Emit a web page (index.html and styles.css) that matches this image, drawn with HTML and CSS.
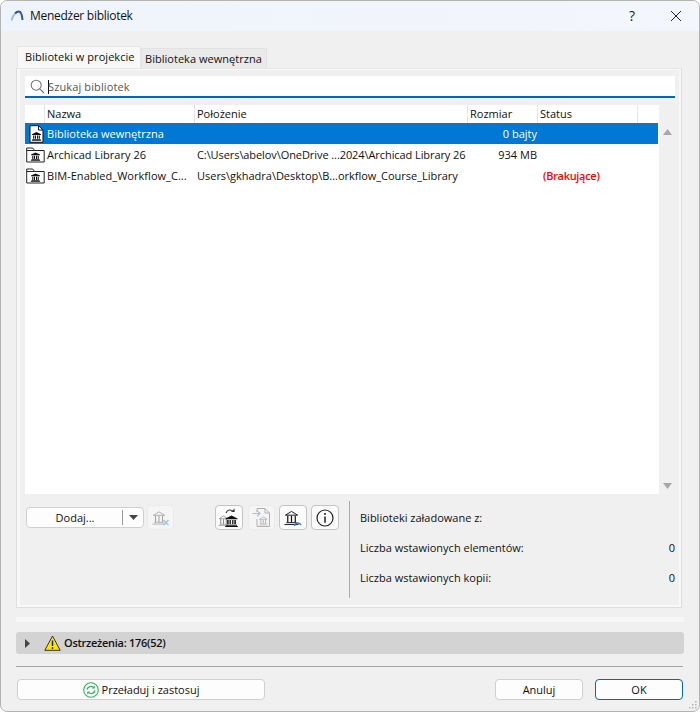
FILE: index.html
```html
<!DOCTYPE html>
<html lang="pl">
<head>
<meta charset="utf-8">
<title>Menedżer bibliotek</title>
<link rel="stylesheet" href="styles.css">
</head>
<body>
<svg class="defs" width="0" height="0">
  <symbol id="bank" viewBox="0 0 12 11">
    <path d="M6 .5 11.500 3.200V4H.5v-.8z" fill="currentColor"/>
    <path d="M2 4.500h1.400v4H2zM4.200 4.500h1.200v4H4.200zM6.600 4.500h1.200v4H6.600zM8.600 4.500H10v4H8.600z" fill="currentColor"/>
    <path d="M1 9h10v.9H1zM.2 10h11.600v1H.2z" fill="currentColor"/>
  </symbol>
  <symbol id="bank-line" viewBox="0 0 16 16">
    <path d="M1.500 5.500 8 1.500l6.500 4z" fill="none" stroke="currentColor"/>
    <path d="M4 6v7M8 6v7M12 6v7" fill="none" stroke="currentColor" stroke-width="1.300"/>
    <path d="M2.500 13.500h11M.5 15.500h15" fill="none" stroke="currentColor"/>
  </symbol>
</svg>
<div class="window">
  <header class="titlebar">
    <svg class="app-logo" width="16" height="14" viewBox="0 0 16 14"><path d="M5 4.500C6.200 3.200 7.500 2.600 8.800 2.600c2 0 3.200 3 3.700 8.400" fill="none" stroke="#2a4fb8" stroke-width="2"/><path d="M1.500 11.500C2.300 8.500 3.500 6 5 4.500" fill="none" stroke="#9dbcf0" stroke-width="2"/></svg>
    <span class="title">Menedżer bibliotek</span>
    <span class="help">?</span>
    <svg class="close" width="12" height="12" viewBox="0 0 12 12"><path d="M1 1l10 10M11 1 1 11" stroke="#222" stroke-width="1" fill="none"/></svg>
  </header>
  <main class="content">
    <div class="tabs">
      <div class="tab active">Biblioteki w projekcie</div>
      <div class="tab">Biblioteka wewnętrzna</div>
    </div>
    <section class="panel">
      <div class="search">
        <svg class="search-icon" width="15" height="15" viewBox="0 0 15 15"><circle cx="6.200" cy="6.200" r="5" fill="none" stroke="#777" stroke-width="1.100"/><path d="M9.800 9.800l4.200 4.200" stroke="#777" stroke-width="1.200"/></svg>
        <span class="caret"></span><span class="placeholder">Szukaj bibliotek</span>
      </div>
      <div class="list-area">
        <div class="list">
          <div class="row head">
            <div class="cell"></div><div class="cell">Nazwa</div><div class="cell">Położenie</div><div class="cell">Rozmiar</div><div class="cell">Status</div><div class="cell"></div>
          </div>
          <div class="row selected">
            <div class="ico">
              <svg width="15" height="18" viewBox="0 0 15 18"><path d="M1 .7h8.500L14 5v12.300H1z" fill="#fff" stroke="#111"/><path d="M9.500 .7V5H14" fill="none" stroke="#111"/><use href="#bank" x="2.500" y="6.500" width="10" height="9.500" color="#111"/></svg>
            </div>
            <div class="name">Biblioteka wewnętrzna</div><div class="path"></div><div class="size">0 bajty</div><div class="status"></div>
          </div>
          <div class="row">
            <div class="ico">
              <svg width="19" height="16" viewBox="0 0 19 16"><path d="M.7 15V1h6l2 2.500h9.500V15z" fill="#fff" stroke="#222"/><path d="M.7 3.500h8" fill="none" stroke="#222"/><use href="#bank" x="4.500" y="5" width="10" height="9" color="#111"/></svg>
            </div>
            <div class="name">Archicad Library 26</div><div class="path">C:\Users\abelov\OneDrive ...2024\Archicad Library 26</div><div class="size">934 MB</div><div class="status"></div>
          </div>
          <div class="row">
            <div class="ico">
              <svg width="19" height="16" viewBox="0 0 19 16"><path d="M.7 15V1h6l2 2.500h9.500V15z" fill="#fff" stroke="#222"/><path d="M.7 3.500h8" fill="none" stroke="#222"/><use href="#bank" x="4.500" y="5" width="10" height="9" color="#111"/></svg>
            </div>
            <div class="name">BIM-Enabled_Workflow_C...</div><div class="path path-wide">Users\gkhadra\Desktop\B...orkflow_Course_Library</div><div class="size"></div><div class="status missing">(Brakujące)</div>
          </div>
        </div>
        <div class="scroll">
          <svg width="9" height="6" viewBox="0 0 9 6"><path d="M4.500 0 9 6H0z" fill="#a8a8a8"/></svg>
          <svg width="9" height="6" viewBox="0 0 9 6"><path d="M0 0h9L4.500 6z" fill="#a8a8a8"/></svg>
        </div>
      </div>
      <div class="lower">
        <div class="actions">
          <div class="split">
            <span class="split-label">Dodaj...</span>
            <span class="split-arrow"><svg width="9" height="5" viewBox="0 0 9 5"><path d="M0 0h9L4.500 5z" fill="#444"/></svg></span>
          </div>
          <button class="icon-btn disabled">
            <svg width="20" height="20" viewBox="0 0 20 20"><use href="#bank-line" x="1" y="2" width="14" height="15" color="#a8a8a8"/><path d="M12.500 12l5 5M17.500 12l-5 5" stroke="#9cc3ec" stroke-width="1.200"/></svg>
          </button>
          <div class="icon-group">
            <button class="icon-btn">
              <svg width="22" height="21" viewBox="0 0 22 21"><use href="#bank-line" x="0" y="8" width="11" height="11" color="#808080"/><use href="#bank" x="6" y="8" width="15" height="12" color="#111"/><path d="M8 6C9.500 2.500 13 2 15 4.500" fill="none" stroke="#333" stroke-width="1.100"/><path d="M13 5h3.600V1.500z" fill="#333"/></svg>
            </button>
            <button class="icon-btn disabled">
              <svg width="20" height="21" viewBox="0 0 20 21"><path d="M5 5V1.500h8l4.500 4.500v13.500H5V12" fill="none" stroke="#b0b0b0"/><path d="M13 1.500V6h4.500" fill="none" stroke="#b0b0b0"/><use href="#bank-line" x="6.500" y="9" width="9.500" height="9.500" color="#a0a0a0"/><path d="M.5 6.500h7M5 3.800 8 6.500 5 9.200" fill="none" stroke="#9cc3ec" stroke-width="1.200"/></svg>
            </button>
            <button class="icon-btn">
              <svg width="20" height="20" viewBox="0 0 20 20"><use href="#bank-line" x="1" y="1" width="15" height="17" color="#111"/><path d="M11.500 18a3.400 3.400 0 0 1 6.500-1" fill="none" stroke="#2f7fd6" stroke-width="1.500"/></svg>
            </button>
            <button class="icon-btn">
              <svg width="20" height="20" viewBox="0 0 20 20"><circle cx="10" cy="10" r="8" fill="none" stroke="#222" stroke-width="1.200"/><circle cx="10" cy="6" r="1" fill="#222"/><path d="M10 8.500v6.200" stroke="#222" stroke-width="1.500"/></svg>
            </button>
          </div>
        </div>
        <div class="info">
          <div class="info-row"><span>Biblioteki załadowane z:</span></div>
          <div class="info-row"><span>Liczba wstawionych elementów:</span><span>0</span></div>
          <div class="info-row"><span>Liczba wstawionych kopii:</span><span>0</span></div>
        </div>
      </div>
    </section>
    <div class="stripe"></div>
    <div class="warnings">
      <svg class="disclosure" width="5" height="9" viewBox="0 0 5 9"><path d="M0 0l5 4.500L0 9z" fill="#444"/></svg>
      <svg class="warn-icon" width="17" height="16" viewBox="0 0 17 16"><path d="M8.500 1 16.200 15.300H.8z" fill="#ffe600" stroke="#333"/><path d="M8.500 5.500v5.500" stroke="#222" stroke-width="1.500"/><circle cx="8.500" cy="13" r=".9" fill="#222"/></svg>
      <b>Ostrzeżenia: 176(52)</b>
    </div>
    <hr class="rule">
    <footer class="footer">
      <button class="btn reload">
        <svg width="16" height="16" viewBox="0 0 16 16"><circle cx="8" cy="8" r="7.300" fill="#fff" stroke="#2eb35c" stroke-width="1.100"/><path d="M4 7.500C4.500 5 7.500 3.500 10.500 5.200M12 8.500c-.5 2.500-3.500 4-6.500 2.300" fill="none" stroke="#2eb35c" stroke-width="1.300"/><path d="M11.800 3.500v3h-3zM4.200 12.500v-3h3z" fill="#2eb35c"/></svg>
        Przeładuj i zastosuj
      </button>
      <div class="footer-right">
        <button class="btn cancel">Anuluj</button>
        <button class="btn ok">OK</button>
      </div>
    </footer>
  </main>
  <svg class="grip" width="10" height="10" viewBox="0 0 10 10"><path d="M7 1h1.500v1.500H7zM4 4h1.500v1.500H4zM7 4h1.500v1.500H7zM1 7h1.500v1.500H1zM4 7h1.500v1.500H4zM7 7h1.500v1.500H7z" fill="#b5b5b5"/></svg>
</div>
</body>
</html>
```
FILE: styles.css
```css
* { box-sizing: border-box; }
html, body { margin: 0; padding: 0; background: #fff; }
body { font: 11px/14px "Open Sans", "Noto Sans", sans-serif; color: #111; }
.defs { position: absolute; }
button { font: inherit; color: inherit; padding: 0; }

.window {
  position: relative;
  width: 700px; height: 712px;
  background: #f0f0f0;
  border: 1px solid #b4b4b4;
  border-radius: 7px;
  overflow: hidden;
  display: flex; flex-direction: column;
}
.titlebar {
  height: 30px; flex: none;
  display: flex; align-items: center;
  padding: 0 17px 0 9px;
  background: linear-gradient(90deg, #eff4fc, #f3f6fb);
}
.app-logo { margin-right: 4px; }
.title { font-size: 12px; flex: 1; letter-spacing: -.28px; }
.help { font-size: 14px; margin-right: 35px; color: #222; }

.content { flex: 1; padding: 15px 15px 0 15px; display: flex; flex-direction: column; }
.tabs { display: flex; align-items: flex-end; height: 22px; padding-left: 1px; }
.tab {
  height: 20px; padding: 3px 3px 0;
  background: #eaeaea; border: 1px solid #e2e2e2; border-bottom: 0;
  white-space: nowrap;
}
.tab.active {
  height: 22px; width: 124px; padding: 3px 7px 0;
  background: #f8f8f8; border-color: #e6e6e6;
  letter-spacing: .05px;
}
.tab:not(.active) { width: 126px; letter-spacing: .03px; }

.panel {
  height: 540px; margin: 0; width: 666px;
  border: 1px solid #dedede; border-top-color: #e6e6e6;
  box-shadow: inset 3px 0 #f8f8f8, inset -2px 0 #f8f8f8, inset 0 -2px #f8f8f8, inset 0 1px #f8f8f8;
  padding: 7px 8px 0;
  display: flex; flex-direction: column;
}
.search {
  height: 22px; flex: none; width: 650px;
  background: #fff; border-bottom: 2px solid #0067c0;
  display: flex; align-items: center; padding: 1px 0 0 5px; color: #555;
}
.search-icon { margin-right: 3px; }
.caret { width: 1px; height: 14px; background: #111; margin-right: -1px; }
.placeholder { letter-spacing: .12px; }
.list-area { display: flex; margin-top: 7px; height: 389px; flex: none; }
.list { width: 634px; background: #fff; flex: none; }
.row {
  display: grid; grid-template-columns: 20px 150px 273px 70px 100px 20px;
  height: 21px; align-items: center; white-space: nowrap;
}
.row.head { height: 18px; width: 632px; }
.cell { height: 100%; padding: 2px 0 0 2px; border-right: 1px solid #e5e5e5; }
.cell:last-child { border-right: 0; }
.selected { background: #0078d4; color: #fff; width: 633px; }
.ico { display: flex; align-items: center; justify-content: flex-start; height: 100%; padding-left: 1px; }
.selected .ico { padding-left: 4px; }
.name { padding-left: 2px; letter-spacing: .03px; }
.path { padding-left: 2px; letter-spacing: -.08px; }
.path-wide { letter-spacing: -.02px; }
.size { text-align: right; padding-right: 1px; }
.status { padding-left: 5px; }
.missing { color: #f00; font-weight: 600; letter-spacing: -.3px; }
.scroll {
  flex: 1; display: flex; flex-direction: column; justify-content: space-between;
  align-items: flex-start; padding: 24px 0 5px 4px;
}

.lower { display: flex; margin-top: 7px; height: 97px; }
.actions { width: 324px; display: flex; align-items: flex-start; padding: 6px 0 0 1px; }
.split {
  width: 118px; height: 21px; flex: none;
  background: #fdfdfd; border: 1px solid #cfcfcf; border-radius: 4px;
  display: flex; align-items: center;
}
.split-label { flex: 1; text-align: center; padding: 1px 0 0 1px; border-right: 1px solid #999; height: 15px; line-height: 14px; }
.split-arrow { width: 20px; display: flex; justify-content: center; }
.icon-btn {
  width: 28px; height: 25px; margin-top: -2px;
  background: #fbfbfb; border: 1px solid #c4c4c4; border-radius: 4px;
  display: flex; align-items: center; justify-content: center;
}
.icon-btn.disabled { background: #f5f5f5; border-color: #ebebeb; }
.actions > .icon-btn { margin-left: 3px; width: 27px; }
.icon-group { display: flex; margin-left: 41px; gap: 4px; }
.icon-group .icon-btn:nth-child(2) { width: 27px; margin-left: 1px; }
.info {
  flex: 1; border-left: 1px solid #a9a9a9;
  margin-right: -2px;
  padding: 2px 0 0 10px;
}
.info-row { display: flex; justify-content: space-between; height: 30px; align-items: center; }

.stripe { height: 5px; margin-top: 9px; background: #f7f7f7; flex: none; width: 668px; }
.warnings {
  height: 22px; margin-top: 10px; flex: none; width: 668px;
  background: #d3d3d3; border-radius: 3px;
  display: flex; align-items: center; padding-left: 9px;
}
.warn-icon { margin: 0 3px 0 14px; }
.warnings b { font-weight: 600; letter-spacing: -.28px; }
.rule { width: 667px; height: 1px; margin: 12px 0 0; border: 0; background: #a4a4a4; flex: none; }
.footer { display: flex; justify-content: space-between; margin-top: 12px; padding-left: 1px; width: 667px; }
.btn {
  height: 21px; background: #fdfdfd; border: 1px solid #cfcfcf; border-radius: 4px;
  display: flex; align-items: center; justify-content: center;
}
.reload { width: 248px; gap: 3px; }
.reload svg { flex: none; }
.footer-right { display: flex; gap: 12px; }
.cancel, .ok { width: 88px; }
.ok { border-color: #0067c0; }
.grip { position: absolute; right: 1px; bottom: 1px; }
```
